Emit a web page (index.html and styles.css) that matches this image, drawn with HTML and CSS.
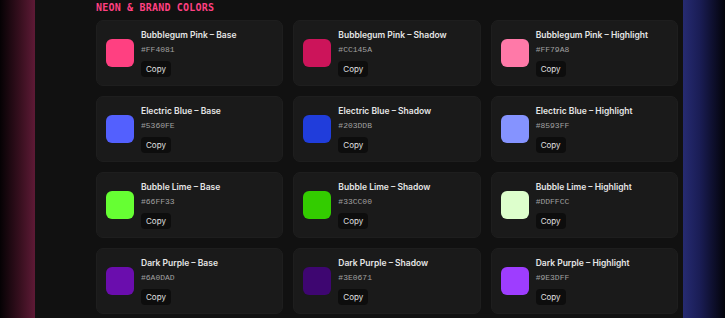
FILE: index.html
```html
<!DOCTYPE html>
<html lang="en">
<head>
  <meta charset="UTF-8">
  <meta name="viewport" content="width=device-width, initial-scale=1.0">
  <title>Palette</title>
  <link rel="stylesheet" href="styles.css">
</head>
<body>
  <div class="page">
    <div class="edge edge-left"></div>
    <main class="panel">
      <h2 class="section-title">Neon &amp; Brand Colors</h2>
      <div class="grid">
        <div class="card">
          <div class="swatch" style="background:#FF4081"></div>
          <div class="info">
            <div class="name">Bubblegum Pink – Base</div>
            <div class="hex">#FF4081</div>
            <button class="copy">Copy</button>
          </div>
        </div>
        <div class="card">
          <div class="swatch" style="background:#CC145A"></div>
          <div class="info">
            <div class="name">Bubblegum Pink – Shadow</div>
            <div class="hex">#CC145A</div>
            <button class="copy">Copy</button>
          </div>
        </div>
        <div class="card">
          <div class="swatch" style="background:#FF79A8"></div>
          <div class="info">
            <div class="name">Bubblegum Pink – Highlight</div>
            <div class="hex">#FF79A8</div>
            <button class="copy">Copy</button>
          </div>
        </div>

        <div class="card">
          <div class="swatch" style="background:#5360FE"></div>
          <div class="info">
            <div class="name">Electric Blue – Base</div>
            <div class="hex">#5360FE</div>
            <button class="copy">Copy</button>
          </div>
        </div>
        <div class="card">
          <div class="swatch" style="background:#203DDB"></div>
          <div class="info">
            <div class="name">Electric Blue – Shadow</div>
            <div class="hex">#203DDB</div>
            <button class="copy">Copy</button>
          </div>
        </div>
        <div class="card">
          <div class="swatch" style="background:#8593FF"></div>
          <div class="info">
            <div class="name">Electric Blue – Highlight</div>
            <div class="hex">#8593FF</div>
            <button class="copy">Copy</button>
          </div>
        </div>

        <div class="card">
          <div class="swatch" style="background:#66FF33"></div>
          <div class="info">
            <div class="name">Bubble Lime – Base</div>
            <div class="hex">#66FF33</div>
            <button class="copy">Copy</button>
          </div>
        </div>
        <div class="card">
          <div class="swatch" style="background:#33CC00"></div>
          <div class="info">
            <div class="name">Bubble Lime – Shadow</div>
            <div class="hex">#33CC00</div>
            <button class="copy">Copy</button>
          </div>
        </div>
        <div class="card">
          <div class="swatch" style="background:#DDFFCC"></div>
          <div class="info">
            <div class="name">Bubble Lime – Highlight</div>
            <div class="hex">#DDFFCC</div>
            <button class="copy">Copy</button>
          </div>
        </div>

        <div class="card">
          <div class="swatch" style="background:#6A0DAD"></div>
          <div class="info">
            <div class="name">Dark Purple – Base</div>
            <div class="hex">#6A0DAD</div>
            <button class="copy">Copy</button>
          </div>
        </div>
        <div class="card">
          <div class="swatch" style="background:#3E0671"></div>
          <div class="info">
            <div class="name">Dark Purple – Shadow</div>
            <div class="hex">#3E0671</div>
            <button class="copy">Copy</button>
          </div>
        </div>
        <div class="card">
          <div class="swatch" style="background:#9E3DFF"></div>
          <div class="info">
            <div class="name">Dark Purple – Highlight</div>
            <div class="hex">#9E3DFF</div>
            <button class="copy">Copy</button>
          </div>
        </div>
      </div>
    </main>
    <div class="edge edge-right"></div>
  </div>
</body>
</html>
```

FILE: styles.css
```css
html, body {
  margin: 0;
  height: 100%;
  background: #111111;
  overflow: hidden;
}

.page {
  display: flex;
  height: 318px;
}

.edge {
  flex: none;
}

.edge-left {
  width: 35px;
  background: linear-gradient(to right, #050204, #3a1020 60%, #5e1a36);
}

.edge-right {
  width: 42px;
  background: linear-gradient(to right, #262b72, #1a1d55 40%, #03030a);
}

.panel {
  flex: 1;
  background: #111111;
  padding: 2px 5px 0 61px;
}

.section-title {
  margin: 0 0 6px;
  font-family: "DejaVu Sans Mono", monospace;
  font-weight: bold;
  font-size: 10px;
  line-height: 12px;
  letter-spacing: 0.2px;
  text-transform: uppercase;
  color: #ff4081;
}

.grid {
  display: grid;
  grid-template-columns: repeat(3, 1fr);
  column-gap: 10px;
  row-gap: 10px;
}

.card {
  display: flex;
  align-items: center;
  gap: 7px;
  height: 66px;
  box-sizing: border-box;
  padding: 8px 10px 9px 9px;
  background: #1a1a1a;
  border: 1px solid #1e1e1e;
  border-radius: 7px;
}

.swatch {
  flex: none;
  width: 28px;
  height: 28px;
  border-radius: 6px;
}

.info {
  display: flex;
  flex-direction: column;
  align-items: flex-start;
  min-width: 0;
}

.name {
  font-family: Inter, "Noto Sans", sans-serif;
  font-weight: 600;
  font-size: 8.5px;
  line-height: 12px;
  color: #e6e6e6;
  white-space: nowrap;
}

.hex {
  margin-top: 3px;
  font-family: "Liberation Mono", monospace;
  font-size: 8px;
  line-height: 12px;
  color: #a0a0a0;
}

.copy {
  margin-top: 5px;
  height: 16px;
  padding: 0 5px;
  border: none;
  border-radius: 4px;
  background: #0d0d0d;
  color: #e0e0e0;
  font-family: Inter, "Noto Sans", sans-serif;
  font-size: 8px;
  line-height: 16px;
}
```
